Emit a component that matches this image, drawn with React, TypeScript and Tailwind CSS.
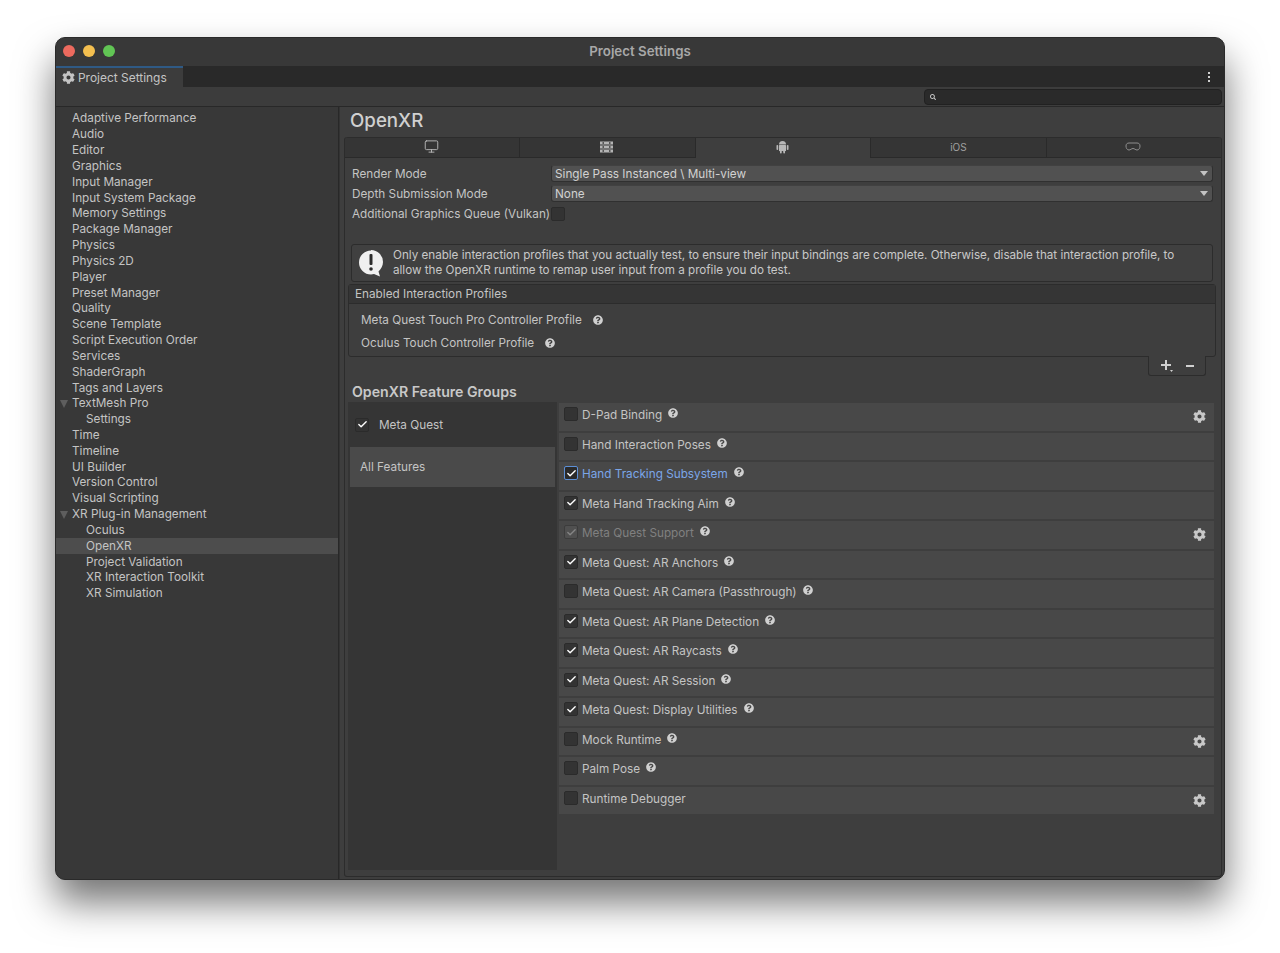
import React from "react";
import { FaCog, FaQuestionCircle, FaSearch } from "react-icons/fa";
import { Monitor, Check } from "lucide-react";

const side: [string, number, boolean?][] = [
  ["Adaptive Performance", 0], ["Audio", 0], ["Editor", 0], ["Graphics", 0], ["Input Manager", 0], ["Input System Package", 0],
  ["Memory Settings", 0], ["Package Manager", 0], ["Physics", 0], ["Physics 2D", 0], ["Player", 0], ["Preset Manager", 0],
  ["Quality", 0], ["Scene Template", 0], ["Script Execution Order", 0], ["Services", 0], ["ShaderGraph", 0], ["Tags and Layers", 0],
  ["TextMesh Pro", 0, true], ["Settings", 1], ["Time", 0], ["Timeline", 0], ["UI Builder", 0], ["Version Control", 0], ["Visual Scripting", 0],
  ["XR Plug-in Management", 0, true], ["Oculus", 1], ["OpenXR", 1], ["Project Validation", 1], ["XR Interaction Toolkit", 1], ["XR Simulation", 1],
];

type F = { n: string; c?: boolean; gear?: boolean; blue?: boolean; dim?: boolean; noHelp?: boolean };
const features: F[] = [
  { n: "D-Pad Binding", gear: true },
  { n: "Hand Interaction Poses" },
  { n: "Hand Tracking Subsystem", c: true, blue: true },
  { n: "Meta Hand Tracking Aim", c: true },
  { n: "Meta Quest Support", c: true, dim: true, gear: true },
  { n: "Meta Quest: AR Anchors", c: true },
  { n: "Meta Quest: AR Camera (Passthrough)" },
  { n: "Meta Quest: AR Plane Detection", c: true },
  { n: "Meta Quest: AR Raycasts", c: true },
  { n: "Meta Quest: AR Session", c: true },
  { n: "Meta Quest: Display Utilities", c: true },
  { n: "Mock Runtime", gear: true },
  { n: "Palm Pose" },
  { n: "Runtime Debugger", gear: true, noHelp: true },
];

function Box({ c, blue, dim }: { c?: boolean; blue?: boolean; dim?: boolean }) {
  return (
    <span className={
      "w-[14px] h-[14px] rounded-[2px] shrink-0 flex items-center justify-center border " +
      (blue ? "border-[#5c8fd6] bg-[#2a2a2a]" : dim ? "border-[#3c3c3c] bg-[#505050]" : "border-[#2b2b2b] bg-[#333333]")
    }>
      {c && <Check size={11} strokeWidth={3} className={dim ? "text-[#858585]" : "text-white"} />}
    </span>
  );
}

function Caret() {
  return <span className="w-0 h-0 border-l-[4px] border-r-[4px] border-t-[5px] border-l-transparent border-r-transparent border-t-[#c4c4c4]" />;
}

function Select({ text }: { text: string }) {
  return (
    <div className="flex-1 h-[17px] rounded-[3px] bg-[#515151] border border-[#303030] border-t-[#414141] flex items-center justify-between pl-[3px] pr-[4px] text-[#d2d2d2]">
      <span>{text}</span>
      <Caret />
    </div>
  );
}

function Tab({ active, children, last }: { active?: boolean; children: React.ReactNode; last?: boolean }) {
  return (
    <div className={
      "flex-1 h-full flex items-center justify-center " +
      (last ? "" : "border-r ") +
      (active ? "bg-[#3e3e3e] border-[#2a2a2a]" : "bg-[#353535] border-[#2a2a2a] border-b")
    }>
      {children}
    </div>
  );
}

function Help() {
  return <FaQuestionCircle size={10} className="text-[#d0d0d0] shrink-0" />;
}

export default function App() {
  return (
    <div className="w-[1280px] h-[953px] bg-white pt-[37px] pl-[55px] overflow-hidden text-[11.75px] leading-[16px] text-[#c4c4c4]" style={{ fontFamily: "Inter, 'Liberation Sans', sans-serif" }}>
      <div className="w-[1170px] h-[843px] rounded-[10px] overflow-hidden bg-[#383838] border border-[#2a2a2a] shadow-[0_22px_38px_rgba(0,0,0,0.55)] flex flex-col">
        <div className="h-[28px] shrink-0 bg-[#383838] relative flex items-center justify-center pb-[2px] font-semibold text-[#a8a8a8] text-[13.3px]">
          <div className="absolute left-[7px] top-[7px] flex gap-[8px]">
            <span className="w-[12px] h-[12px] rounded-full bg-[#ed6a5e]" />
            <span className="w-[12px] h-[12px] rounded-full bg-[#f4bf4f]" />
            <span className="w-[12px] h-[12px] rounded-full bg-[#61c554]" />
          </div>
          Project Settings
        </div>
        <div className="h-[21px] shrink-0 bg-[#292929] flex items-stretch justify-between">
          <div className="w-[127px] bg-[#3c3c3c] border-t-2 border-[#2f5a85] flex items-center pl-[6px] gap-[3px] text-[11.95px] text-[#c4c4c4]">
            <FaCog size={13} className="text-[#c4c4c4]" />
            Project Settings
          </div>
          <div className="w-[16px] mr-[7px] flex flex-col items-center justify-center gap-[2px]">
            <span className="w-[2px] h-[2px] bg-[#d0d0d0]" />
            <span className="w-[2px] h-[2px] bg-[#d0d0d0]" />
            <span className="w-[2px] h-[2px] bg-[#d0d0d0]" />
          </div>
        </div>
        <div className="h-[20px] shrink-0 bg-[#3c3c3c] border-b border-[#282828] flex items-center justify-end pr-[2px]">
          <div className="w-[298px] h-[16px] rounded-[4px] bg-[#2a2a2a] border border-[#212121] flex items-center pl-[5px]">
            <FaSearch size={6} className="text-[#c8c8c8]" />
          </div>
        </div>
        <div className="flex-1 flex min-h-0">
          <div className="w-[283px] shrink-0 bg-[#383838] pt-[3.5px] border-r border-[#282828]">
            {side.map(([t, ind, arrow]) => (
              <div key={t} className={"h-[15.83px] flex items-center relative whitespace-nowrap " + (ind ? "pl-[30px]" : "pl-[16px]") + (t === "OpenXR" ? " bg-[#4d4d4d]" : "")}>
                {arrow && <span className="absolute left-[4px] top-[5px] w-0 h-0 border-l-[4.5px] border-r-[4.5px] border-t-[8px] border-l-transparent border-r-transparent border-t-[#5e5e5e]" />}
                {t}
              </div>
            ))}
          </div>
          <div className="flex-1 bg-[#3e3e3e] border-l border-[#333333] min-w-0 flex flex-col pl-[4px] pr-[2px] pb-[2px]">
            <div className="h-[30px] shrink-0 flex items-center pl-[6px] pb-[2px] text-[18.7px] font-medium text-[#d0d0d0]">OpenXR</div>
            <div className="flex-1 flex flex-col border border-t-0 border-[#2c2c2c] rounded-[3px] min-h-0">
              <div className="h-[21px] shrink-0 flex rounded-t-[3px] overflow-hidden border-t border-[#2c2c2c]">
                <Tab><Monitor size={15} strokeWidth={1.5} className="text-[#b8b8b8] -translate-x-px -translate-y-px" /></Tab>
                <Tab>
                  <svg width="13" height="12" viewBox="0 0 13 12" fill="#b4b4b4" className="-translate-x-px -translate-y-px">
                    <rect x="0" y="0.5" width="13" height="3" /><rect x="0" y="4.500" width="13" height="3" /><rect x="0" y="8.500" width="13" height="3" />
                    <rect x="2.500" y="1" width="1.500" height="2" fill="#555" /><rect x="9" y="1" width="1.500" height="2" fill="#555" />
                    <rect x="2.500" y="5" width="1.500" height="2" fill="#555" /><rect x="9" y="5" width="1.500" height="2" fill="#555" />
                    <rect x="2.500" y="9" width="1.500" height="2" fill="#555" /><rect x="9" y="9" width="1.500" height="2" fill="#555" />
                  </svg>
                </Tab>
                <Tab active>
                  <svg width="13" height="14" viewBox="0 0 13 14" fill="#b8b8b8" className="-translate-x-px -translate-y-px">
                    <path d="M3 4.500a3.500 3.500 0 0 1 7 0z" />
                    <rect x="3" y="5" width="7" height="6" rx="0.500" />
                    <rect x="0.500" y="5" width="1.700" height="5" rx="0.800" />
                    <rect x="10.800" y="5" width="1.700" height="5" rx="0.800" />
                    <rect x="4" y="10.500" width="1.700" height="3" rx="0.800" />
                    <rect x="7.300" y="10.500" width="1.700" height="3" rx="0.800" />
                  </svg>
                </Tab>
                <Tab><span className="text-[10px] text-[#a0a0a0] -translate-y-px">iOS</span></Tab>
                <Tab last>
                  <svg width="16" height="10" viewBox="0 0 16 10" fill="none" stroke="#8e8e8e" strokeWidth="1" className="-translate-x-px -translate-y-px">
                    <path d="M4 1h8c1.800 0 3 1 3 3s-1 4-3 4c-1.500 0-2.500-1.500-4-1.500S5.500 8 4 8C2 8 1 6 1 4s1.200-3 3-3z" />
                  </svg>
                </Tab>
              </div>
              <div className="flex-1 flex flex-col min-h-0 pl-[3px] pr-[3px]">
                <div className="pt-[7px] pl-[4px] pr-[5px] flex flex-col gap-[3px]">
                  <div className="flex items-center h-[17px]"><span className="w-[199px] shrink-0">Render Mode</span><Select text="Single Pass Instanced \ Multi-view" /></div>
                  <div className="flex items-center h-[17px]"><span className="w-[199px] shrink-0">Depth Submission Mode</span><Select text="None" /></div>
                  <div className="flex items-center h-[17px]"><span className="w-[199px] shrink-0 whitespace-nowrap">Additional Graphics Queue (Vulkan)</span><Box /></div>
                </div>
                <div className="mt-[22px] ml-[3px] mr-[5px] h-[38px] shrink-0 rounded-[3px] bg-[#404040] border border-[#2c2c2c] flex items-center pl-[6px] text-[11.65px] leading-[15px] text-[#c8c8c8]">
                  <svg width="26" height="29" viewBox="0 0 26 29" className="shrink-0">
                    <path d="M13 1a12 12 0 0 1 12 12c0 4-2 7-4.500 9.500l1.500 5-6-2.500c-1 .3-2 .5-3 .5a12 12 0 0 1 0-24z" fill="#f0f0f0" />
                    <rect x="11.500" y="5" width="3" height="11" rx="1" fill="#2c2c2c" />
                    <circle cx="13" cy="20" r="1.800" fill="#2c2c2c" />
                  </svg>
                  <div className="ml-[9px] whitespace-nowrap">Only enable interaction profiles that you actually test, to ensure their input bindings are complete. Otherwise, disable that interaction profile, to<br />allow the OpenXR runtime to remap user input from a profile you do test.</div>
                </div>
                <div className="h-[73px] mt-[2px] shrink-0 border border-[#2c2c2c] rounded-[3px] mr-[2px] bg-[#3e3e3e]">
                  <div className="h-[19px] bg-[#353535] border-b border-[#2c2c2c] flex items-center pl-[6px]">Enabled Interaction Profiles</div>
                  <div className="h-[23px] mt-[4px] flex items-center pl-[12px] gap-[11px]">Meta Quest Touch Pro Controller Profile <Help /></div>
                  <div className="h-[23px] flex items-center pl-[12px] gap-[11px]">Oculus Touch Controller Profile <Help /></div>
                </div>
                <div className="self-end mr-[12px] w-[58px] h-[20px] shrink-0 -mt-px bg-[#3e3e3e] border border-t-0 border-[#2c2c2c] rounded-b-[3px] flex items-center justify-center gap-[13px] text-[#d0d0d0]">
                  <svg width="12" height="12" viewBox="0 0 12 12" fill="#d0d0d0"><rect x="4" y="0" width="2" height="10" /><rect x="0" y="4" width="10" height="2" /><path d="M9 10h3l-1.500 2z" /></svg>
                  <span className="w-[8px] h-[2px] bg-[#d0d0d0]" />
                </div>
                <div className="h-[26px] shrink-0 flex items-end pl-[4px] pb-[2px] font-semibold text-[14.15px] text-[#c8c8c8]">OpenXR Feature Groups</div>
                <div className="flex-1 flex min-h-0 pb-[6px] pr-[4px]">
                  <div className="w-[209px] shrink-0 bg-[#353535] mr-[2px] pt-px">
                    <div className="h-[43px] flex items-center pl-[7px] gap-[10px]"><Box c /> Meta Quest</div>
                    <div className="h-[40px] mt-px ml-[2px] mr-[2px] bg-[#4a4a4a] flex items-center pl-[10px]">All Features</div>
                  </div>
                  <div className="flex-1 min-w-0 pt-[1.4px]">
                    {features.map((f) => (
                      <div key={f.n} className="h-[27.5px] mb-[2px] bg-[#484848] flex items-start pl-[5px] pr-[8px] pt-[4px]">
                        <Box c={f.c} blue={f.blue} dim={f.dim} />
                        <span className={"ml-[4px] whitespace-nowrap " + (f.blue ? "text-[#7ba6e8]" : f.dim ? "text-[#808080]" : "text-[#c4c4c4]")}>{f.n}</span>
                        {!f.noHelp && <span className="ml-[6px] mt-[1px]"><Help /></span>}
                        {f.gear && <FaCog size={13} className="ml-auto mt-[3px] text-[#c8c8c8]" />}
                      </div>
                    ))}
                  </div>
                </div>
              </div>
            </div>
          </div>
        </div>
      </div>
    </div>
  );
}
